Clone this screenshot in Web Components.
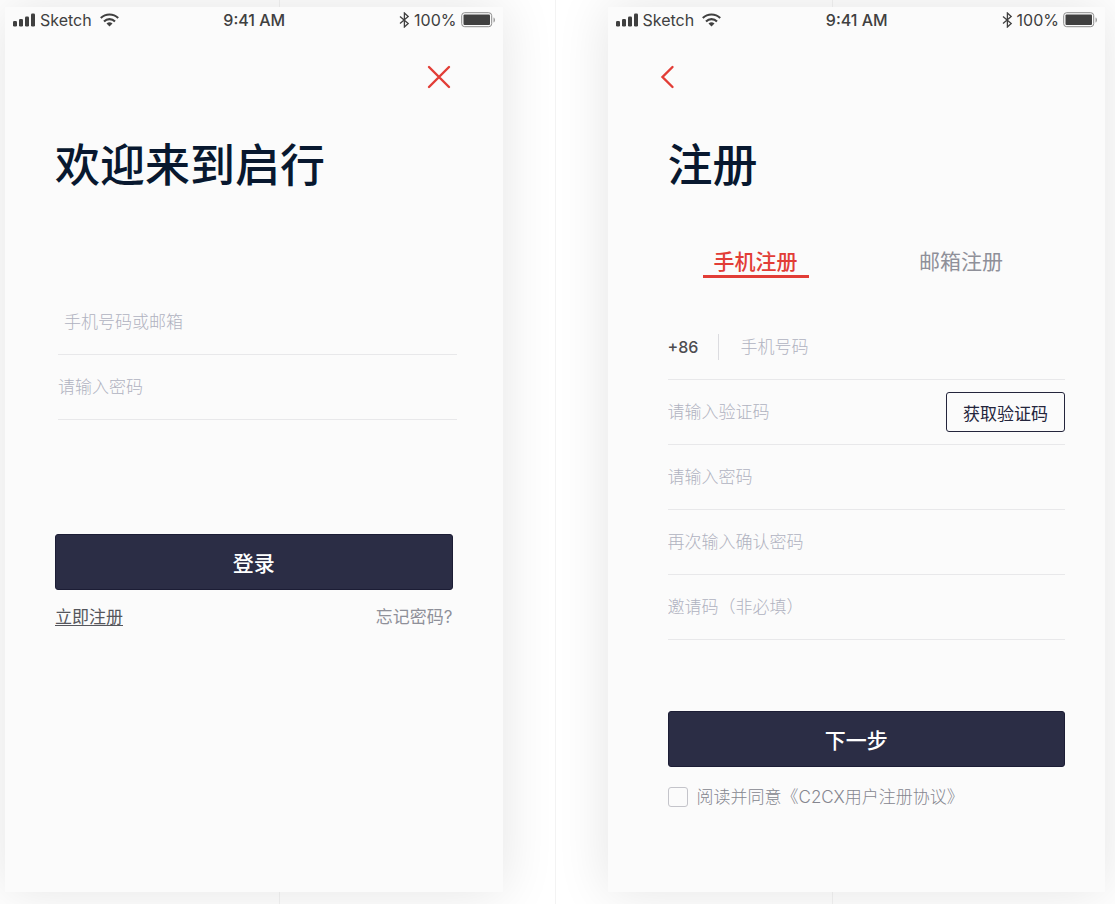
<!DOCTYPE html>
<html lang="zh-CN">
<head>
  <meta charset="utf-8">
  <meta name="viewport" content="width=device-width, initial-scale=1">
  <title>启行</title>
  <style>
    * {
      box-sizing: border-box;
    }
    body {
      margin: 0;
      min-height: 100vh;
      font-family: Inter, "Noto Sans CJK SC", sans-serif;
      background: #fff;
    }
  </style>
</head>
<body>
  <auth-board>
    <phone-screen>
      <login-view></login-view>
    </phone-screen>
    <phone-screen>
      <register-view></register-view>
    </phone-screen>
  </auth-board>

  <script>
    class AuthBoard extends HTMLElement {
      constructor() {
        super();
        this.attachShadow({ mode: 'open' });
        this.shadowRoot.innerHTML = `
          <style>
            :host {
              box-sizing: border-box;
              display: grid;
              grid-template-columns: 1fr 1fr;
              gap: 105px;
              min-height: 100vh;
              padding: 7px 10px 12px 5px;
              overflow: hidden;
              background:
                linear-gradient(#f3f3f3, #f3f3f3) 25% 0 / 1px 100% no-repeat,
                linear-gradient(#f3f3f3, #f3f3f3) calc(50% - 2px) 0 / 1px 100% no-repeat,
                linear-gradient(#f3f3f3, #f3f3f3) calc(75% - 4px) 0 / 1px 100% no-repeat,
                #fff;
            }
          </style>
          <slot></slot>
        `;
      }
    }

    class PhoneScreen extends HTMLElement {
      constructor() {
        super();
        this.attachShadow({ mode: 'open' });
        this.shadowRoot.innerHTML = `
          <style>
            :host {
              display: flex;
              flex-direction: column;
              min-width: 0;
              background: #fbfbfb;
              box-shadow: 0 0 50px rgba(0, 0, 0, 0.11);
            }
          </style>
          <status-bar></status-bar>
          <slot></slot>
        `;
      }
    }

    class StatusBar extends HTMLElement {
      constructor() {
        super();
        this.attachShadow({ mode: 'open' });
        this.shadowRoot.innerHTML = `
          <style>
            :host {
              display: grid;
              grid-template-columns: 1fr auto 1fr;
              align-items: center;
              height: 26px;
              padding: 0 7px 0 8px;
              color: #404040;
              font-size: 16px;
              line-height: 20px;
            }
            div {
              display: flex;
              align-items: center;
              gap: 4px;
            }
            .right {
              justify-content: flex-end;
            }
            .wifi {
              margin-left: 4px;
            }
            time {
              font-weight: 500;
            }
            svg {
              display: block;
              flex: none;
            }
          </style>
          <div>
            <svg width="23" height="14" viewBox="0 0 23 14" fill="currentColor" aria-hidden="true">
              <rect x="0" y="8" width="4" height="5.5" rx="1.2"/>
              <rect x="6" y="6" width="4" height="7.5" rx="1.2"/>
              <rect x="12" y="3.5" width="4" height="10" rx="1.2"/>
              <rect x="18" y="0.5" width="4" height="13" rx="1.2"/>
            </svg>
            <span>Sketch</span>
            <svg class="wifi" width="19" height="14" viewBox="0 0 19 14" aria-hidden="true">
              <g fill="none" stroke="currentColor" stroke-width="2.1">
                <path d="M0.8 5.1a12.4 12.4 0 0 1 17.4 0"/>
                <path d="M4 8.4a7.8 7.8 0 0 1 11 0"/>
              </g>
              <path d="M6.5 10.6a4.3 4.3 0 0 1 6 0l-3 3z" fill="currentColor"/>
            </svg>
          </div>
          <time>9:41 AM</time>
          <div class="right">
            <svg width="11" height="16" viewBox="0 0 11 16" fill="none" stroke="currentColor" stroke-width="1.3" aria-hidden="true">
              <path d="M1 4.5l8.2 7L5.4 15V1l3.8 3.5-8.2 7"/>
            </svg>
            <span>100%</span>
            <svg width="35" height="16" viewBox="0 0 35 16" aria-hidden="true">
              <rect x="0.7" y="0.7" width="30" height="14" rx="3" fill="none" stroke="#8c8c8c"/>
              <rect x="2.5" y="2.5" width="26.5" height="10.5" rx="1" fill="currentColor"/>
              <path d="M32.5 5.5c2 .6 2 4.400 0 5z" fill="#9c9c9c"/>
            </svg>
          </div>
        `;
      }
    }

    class NavButton extends HTMLElement {
      constructor() {
        super();
        this.attachShadow({ mode: 'open' });
        const back = this.getAttribute('icon') === 'back';
        this.shadowRoot.innerHTML = `
          <style>
            :host {
              display: block;
            }
            button {
              display: block;
              padding: 0;
              border: none;
              background: none;
              color: #e23d36;
              cursor: pointer;
            }
            svg {
              display: block;
            }
          </style>
          <button type="button" aria-label="${back ? '返回' : '关闭'}">
            <svg width="24" height="24" viewBox="0 0 24 24" fill="none" stroke="currentColor" stroke-width="2.4" stroke-linecap="round">
              <path d="${back ? 'M16.500 2L6.500 12l10 10' : 'M2 2l20 20M22 2L2 22'}"/>
            </svg>
          </button>
        `;
      }
    }

    class PageTitle extends HTMLElement {
      constructor() {
        super();
        this.attachShadow({ mode: 'open' });
        this.shadowRoot.innerHTML = `
          <style>
            :host {
              display: block;
            }
            h1 {
              margin: 0;
              color: #08182f;
              font-size: 45px;
              font-weight: 500;
              line-height: 60px;
            }
          </style>
          <h1><slot></slot></h1>
        `;
      }
    }

    class FormField extends HTMLElement {
      constructor() {
        super();
        this.attachShadow({ mode: 'open' });
        const hint = this.getAttribute('hint');
        const type = this.getAttribute('type') || 'text';
        this.shadowRoot.innerHTML = `
          <style>
            :host {
              box-sizing: border-box;
              display: flex;
              align-items: center;
              height: 65px;
              border-bottom: 1px solid #e8e8ea;
            }
            input {
              flex: 1;
              min-width: 0;
              height: 40px;
              padding: 0;
              border: none;
              outline: none;
              background: none;
              color: #2b2d45;
              font: inherit;
              font-size: 17px;
              font-weight: 300;
            }
            :host([inset]) input {
              padding-left: 6px;
            }
            input::placeholder {
              color: #b0b2c0;
              opacity: 1;
            }
          </style>
          <slot name="before"></slot>
          <input type="${type}" placeholder="${hint}" aria-label="${hint}">
          <slot name="after"></slot>
        `;
      }
    }

    class DialCode extends HTMLElement {
      constructor() {
        super();
        this.attachShadow({ mode: 'open' });
        this.shadowRoot.innerHTML = `
          <style>
            :host {
              display: block;
              width: 50px;
              margin-right: 22px;
              border-right: 1px solid #dcdce0;
              color: #4c4c50;
              font-size: 16px;
              font-weight: 500;
              line-height: 26px;
            }
          </style>
          <slot></slot>
        `;
      }
    }

    class ActionButton extends HTMLElement {
      constructor() {
        super();
        this.attachShadow({ mode: 'open' });
        this.shadowRoot.innerHTML = `
          <style>
            :host {
              display: block;
            }
            button {
              display: block;
              width: 100%;
              height: 56px;
              padding: var(--button-padding, 0);
              border: 1px solid #1c1d35;
              border-radius: 3px;
              background: #2b2d45;
              color: #fff;
              font: inherit;
              font-size: 21px;
              font-weight: 500;
              cursor: pointer;
            }
            :host([outline]) button {
              height: 40px;
              padding: 0 16px;
              border-color: #24253c;
              background: none;
              color: #24253c;
              font-size: 17px;
              font-weight: 400;
            }
          </style>
          <button type="button"><slot></slot></button>
        `;
      }
    }

    class TabBar extends HTMLElement {
      constructor() {
        super();
        this.attachShadow({ mode: 'open' });
        this.shadowRoot.innerHTML = `
          <style>
            :host {
              display: flex;
              justify-content: space-between;
              padding: 0 51px 0 35px;
            }
            button {
              height: 30px;
              padding: 0 11px;
              border: none;
              border-bottom: 3px solid transparent;
              background: none;
              color: #8f9099;
              font: inherit;
              font-size: 21px;
              line-height: 27px;
              cursor: pointer;
            }
            button[aria-selected="true"] {
              border-bottom-color: #e23d36;
              color: #e23d36;
              font-weight: 500;
            }
          </style>
        `;
        this.setAttribute('role', 'tablist');
        this.getAttribute('tabs').split(',').forEach((name, i) => {
          const tab = document.createElement('button');
          tab.type = 'button';
          tab.setAttribute('role', 'tab');
          tab.setAttribute('aria-selected', i === 0);
          tab.textContent = name;
          tab.addEventListener('click', () => this.select(tab));
          this.shadowRoot.append(tab);
        });
      }

      select(tab) {
        this.shadowRoot.querySelectorAll('button').forEach((b) => {
          b.setAttribute('aria-selected', b === tab);
        });
      }
    }

    class AgreeCheck extends HTMLElement {
      constructor() {
        super();
        this.attachShadow({ mode: 'open' });
        this.shadowRoot.innerHTML = `
          <style>
            :host {
              display: block;
            }
            label {
              display: flex;
              align-items: center;
              gap: 9px;
              color: #85868f;
              font-size: 17px;
              font-weight: 300;
              line-height: 24px;
            }
            input {
              appearance: none;
              flex: none;
              width: 20px;
              height: 20px;
              margin: 0;
              border: 1px solid #c4c4ca;
              border-radius: 3px;
            }
            input:checked {
              background: #2b2d45;
            }
          </style>
          <label for="agree">
            <input type="checkbox" id="agree">
            <span><slot></slot></span>
          </label>
        `;
      }
    }

    class LoginView extends HTMLElement {
      constructor() {
        super();
        this.attachShadow({ mode: 'open' });
        this.shadowRoot.innerHTML = `
          <style>
            :host {
              display: block;
              padding: 32px 50px 40px;
            }
            nav {
              display: flex;
              justify-content: flex-end;
              padding-right: 2px;
            }
            page-title {
              margin-top: 47px;
            }
            .fields {
              margin: 94px -4px 0 3px;
            }
            action-button {
              margin-top: 114px;
            }
            .links {
              display: flex;
              justify-content: space-between;
              margin-top: 15px;
              font-size: 17px;
              line-height: 24px;
            }
            a {
              color: #8f9099;
              text-decoration: none;
            }
            a.register {
              color: #55565c;
              text-decoration: underline;
              text-underline-offset: 2px;
            }
          </style>
          <nav><nav-button icon="close"></nav-button></nav>
          <page-title>欢迎来到启行</page-title>
          <div class="fields">
            <form-field hint="手机号码或邮箱" inset></form-field>
            <form-field hint="请输入密码" type="password"></form-field>
          </div>
          <action-button>登录</action-button>
          <div class="links">
            <a class="register" href="#register">立即注册</a>
            <a href="#forgot">忘记密码?</a>
          </div>
        `;
      }
    }

    class RegisterView extends HTMLElement {
      constructor() {
        super();
        this.attachShadow({ mode: 'open' });
        this.shadowRoot.innerHTML = `
          <style>
            :host {
              display: block;
              padding: 32px 40px 40px 60px;
            }
            nav {
              margin-left: -12px;
            }
            page-title {
              margin-top: 47px;
            }
            tab-bar {
              margin-top: 52px;
            }
            .fields {
              margin-top: 37px;
            }
            /* keeps the label on the centre line of the screen */
            .next {
              --button-padding: 0 20px 0 0;
              margin-top: 71px;
            }
            agree-check {
              margin-top: 18px;
            }
          </style>
          <nav><nav-button icon="back"></nav-button></nav>
          <page-title>注册</page-title>
          <tab-bar tabs="手机注册,邮箱注册"></tab-bar>
          <div class="fields">
            <form-field hint="手机号码" type="tel">
              <dial-code slot="before">+86</dial-code>
            </form-field>
            <form-field hint="请输入验证码">
              <action-button slot="after" outline>获取验证码</action-button>
            </form-field>
            <form-field hint="请输入密码" type="password"></form-field>
            <form-field hint="再次输入确认密码" type="password"></form-field>
            <form-field hint="邀请码（非必填）"></form-field>
          </div>
          <action-button class="next">下一步</action-button>
          <agree-check>阅读并同意《C2CX用户注册协议》</agree-check>
        `;
      }
    }

    customElements.define('auth-board', AuthBoard);
    customElements.define('phone-screen', PhoneScreen);
    customElements.define('status-bar', StatusBar);
    customElements.define('nav-button', NavButton);
    customElements.define('page-title', PageTitle);
    customElements.define('form-field', FormField);
    customElements.define('dial-code', DialCode);
    customElements.define('action-button', ActionButton);
    customElements.define('tab-bar', TabBar);
    customElements.define('agree-check', AgreeCheck);
    customElements.define('login-view', LoginView);
    customElements.define('register-view', RegisterView);
  </script>
</body>
</html>
